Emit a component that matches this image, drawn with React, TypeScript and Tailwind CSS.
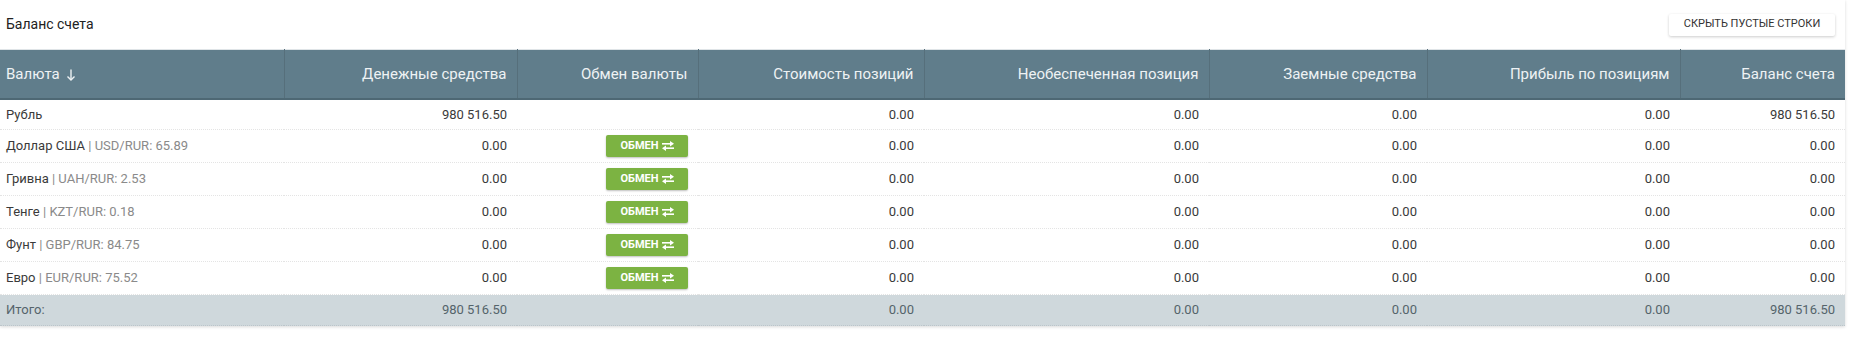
import React from "react";

const cols = [284, 233, 181, 226, 285, 218, 253, 165];

const headers = [
  "Денежные средства",
  "Обмен валюты",
  "Стоимость позиций",
  "Необеспеченная позиция",
  "Заемные средства",
  "Прибыль по позициям",
  "Баланс счета",
];

type Row = { name: string; rate?: string; cash: string; exchange: boolean; balance: string };

const rows: Row[] = [
  { name: "Рубль", cash: "980 516.50", exchange: false, balance: "980 516.50" },
  { name: "Доллар США", rate: "USD/RUR: 65.89", cash: "0.00", exchange: true, balance: "0.00" },
  { name: "Гривна", rate: "UAH/RUR: 2.53", cash: "0.00", exchange: true, balance: "0.00" },
  { name: "Тенге", rate: "KZT/RUR: 0.18", cash: "0.00", exchange: true, balance: "0.00" },
  { name: "Фунт", rate: "GBP/RUR: 84.75", cash: "0.00", exchange: true, balance: "0.00" },
  { name: "Евро", rate: "EUR/RUR: 75.52", cash: "0.00", exchange: true, balance: "0.00" },
];

function SwapIcon() {
  return (
    <svg width="12" height="10" viewBox="0 0 12 10" className="ml-[3px]" fill="white">
      <rect x="0" y="2" width="8" height="1.6" />
      <polygon points="8,0 12,2.8 8,5.6" />
      <rect x="4" y="6.4" width="8" height="1.6" />
      <polygon points="4,4.4 0,7.2 4,10" />
    </svg>
  );
}

function SortIcon() {
  return (
    <svg width="10" height="12" viewBox="0 0 10 12" className="ml-[6px] mt-[2px]" fill="none" stroke="#eef2f4" strokeWidth="1.4">
      <line x1="5" y1="0.5" x2="5" y2="10.5" />
      <polyline points="1.5,7.5 5,11 8.5,7.5" fill="none" />
    </svg>
  );
}

export default function App() {
  return (
    <div className="bg-white w-[1850px] h-[340px]" style={{ fontFamily: "Roboto, 'Liberation Sans', sans-serif" }}>
      <div className="w-[1845px] bg-white shadow-[0_1px_3px_rgba(0,0,0,0.15)]">
        <div className="flex items-center justify-between h-[49px] pl-[6px] pr-[10px]">
          <div className="text-[14px] text-[#212121]">Баланс счета</div>
          <button className="h-[22px] w-[166px] bg-white rounded-[2px] shadow-[0_1px_3px_rgba(0,0,0,0.2)] text-[11px] text-[#333] uppercase tracking-[0px]">
            Скрыть пустые строки
          </button>
        </div>
        <table className="table-fixed border-collapse w-[1845px]">
          <colgroup>
            {cols.map((w, i) => (
              <col key={i} style={{ width: w }} />
            ))}
          </colgroup>
          <thead>
            <tr className="bg-[#607d8b] text-[#eef2f4] text-[15px] h-[49px] border-t border-[#dfe4e7] border-b-2 border-b-[#4e6874]">
              <th className="font-normal text-left pl-[6px] border-r border-[#566f7b]">
                <span className="inline-flex items-center">
                  Валюта
                  <SortIcon />
                </span>
              </th>
              {headers.map((h, i) => (
                <th
                  key={h}
                  className={
                    "font-normal text-right pr-[10px] " + (i < headers.length - 1 ? "border-r border-[#566f7b]" : "")
                  }
                >
                  {h}
                </th>
              ))}
            </tr>
          </thead>
          <tbody className="text-[13px] text-[#3a3a3a] font-normal">
            {rows.map((r) => (
              <tr key={r.name} className={(r.exchange ? "h-[33px]" : "h-[31px]") + " border-b border-dotted border-[#e4e4e4]"}>
                <td className="pl-[6px] font-normal">
                  <span className="text-[#3a3a3a]">{r.name}</span>
                  {r.rate && <span className="text-[#8a8a8a]"> | {r.rate}</span>}
                </td>
                <td className="text-right pr-[10px]">{r.cash}</td>
                <td className="text-right pr-[10px]">
                  {r.exchange && (
                    <span className="inline-flex items-center justify-center h-[22px] w-[82px] bg-[#7cb342] rounded-[2px] shadow-[0_1px_2px_rgba(0,0,0,0.25)] text-white text-[11px] font-bold align-middle">
                      ОБМЕН
                      <SwapIcon />
                    </span>
                  )}
                </td>
                <td className="text-right pr-[10px]">0.00</td>
                <td className="text-right pr-[10px]">0.00</td>
                <td className="text-right pr-[10px]">0.00</td>
                <td className="text-right pr-[10px]">0.00</td>
                <td className="text-right pr-[10px]">{r.balance}</td>
              </tr>
            ))}
            <tr className="h-[31px] bg-[#cfd8dc] text-[#55646b] border-b border-dotted border-[#bcc5ca]">
              <td className="pl-[6px]">Итого:</td>
              <td className="text-right pr-[10px]">980 516.50</td>
              <td></td>
              <td className="text-right pr-[10px]">0.00</td>
              <td className="text-right pr-[10px]">0.00</td>
              <td className="text-right pr-[10px]">0.00</td>
              <td className="text-right pr-[10px]">0.00</td>
              <td className="text-right pr-[10px]">980 516.50</td>
            </tr>
          </tbody>
        </table>
      </div>
    </div>
  );
}
